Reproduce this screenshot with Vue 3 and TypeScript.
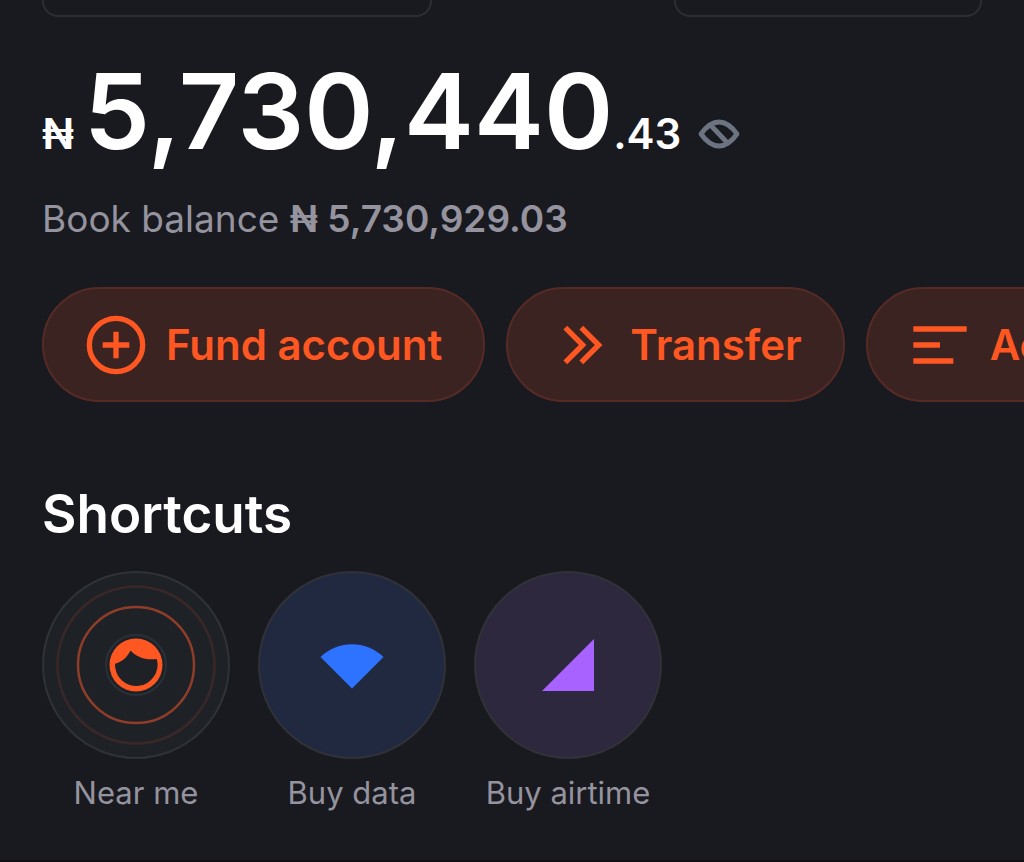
<script setup lang="ts">
interface Action {
  label: string
  icon: 'plus' | 'chevrons' | 'lines'
}

interface Shortcut {
  label: string
  kind: 'near' | 'data' | 'airtime'
}

const actions: Action[] = [
  { label: 'Fund account', icon: 'plus' },
  { label: 'Transfer', icon: 'chevrons' },
  { label: 'Account', icon: 'lines' },
]

const shortcuts: Shortcut[] = [
  { label: 'Near me', kind: 'near' },
  { label: 'Buy data', kind: 'data' },
  { label: 'Buy airtime', kind: 'airtime' },
]
</script>

<template>
  <main class="screen">
    <div class="top">
      <div class="box box-wide"></div>
      <div class="box box-narrow"></div>
    </div>

    <section class="balance">
      <div class="amount">
        <span class="small">₦</span>
        <span class="whole">5,730,440</span>
        <span class="small">.43</span>
        <button class="hide" type="button" aria-label="Hide balance">
          <svg viewBox="0 0 42 30" fill="none" stroke="currentColor" stroke-width="4.8" stroke-linejoin="round">
            <path d="M3 15Q11.500 3 21 3T39 15Q30.500 27 21 27T3 15Z" />
            <path d="M12 5.500 30 24.500" />
          </svg>
        </button>
      </div>
      <p class="book">Book balance <strong>₦ 5,730,929.03</strong></p>
    </section>

    <nav class="actions">
      <button v-for="a in actions" :key="a.label" class="action" type="button">
        <svg viewBox="0 0 24 24" fill="none" stroke="currentColor" stroke-width="2">
          <template v-if="a.icon === 'plus'">
            <circle cx="12" cy="12" r="10" />
            <path d="M7 12H17M12 7V17" />
          </template>
          <path v-else-if="a.icon === 'chevrons'" d="M6.500 5.500 13 12 6.500 18.500M12.500 5.500 19 12 12.500 18.500" />
          <path v-else d="M2 6H22M2 12H12M2 18H17" />
        </svg>
        <span>{{ a.label }}</span>
      </button>
    </nav>

    <section class="shortcuts">
      <h2>Shortcuts</h2>
      <div class="list">
        <button v-for="s in shortcuts" :key="s.label" class="shortcut" type="button">
          <span class="disc" :class="s.kind">
            <svg v-if="s.kind === 'near'" viewBox="2 2 184 184" fill="none">
              <circle cx="94" cy="94" r="78.500" stroke="#3a2827" stroke-width="2.500" />
              <circle cx="94" cy="94" r="58" stroke="#8f3d28" stroke-width="2.500" />
              <circle cx="94" cy="94" r="30" stroke="#2a3038" stroke-width="2" />
              <circle cx="94" cy="94" r="26.500" fill="#ff5722" />
              <path d="M88.500 79.500C93.500 85.500 103 89.500 114.800 88A21.300 21.300 0 1 1 73 92.700C80 91 85.500 86 88.500 79.500Z" fill="#1e2227" />
            </svg>
            <svg v-else-if="s.kind === 'data'" viewBox="2 2 184 184">
              <path d="M94 117.500 62.500 86C80 69 108 69 125.500 86Z" fill="#2e73ff" />
            </svg>
            <svg v-else viewBox="2 2 184 184">
              <path d="M120 68V120H68Z" fill="#a762ff" />
            </svg>
          </span>
          <span>{{ s.label }}</span>
        </button>
      </div>
    </section>
  </main>
</template>

<style>
body {
  margin: 0;
  background: #191920;
}
</style>

<style scoped>
.screen {
  min-height: 100vh;
  box-sizing: border-box;
  overflow: hidden;
  background: #191920;
  border-bottom: 2px solid #101015;
  color: #fff;
  font-family: Inter, "Liberation Sans", sans-serif;
}

button {
  margin: 0;
  padding: 0;
  border: 0;
  background: none;
  color: inherit;
  font: inherit;
}

.top {
  display: flex;
  justify-content: space-between;
  padding: 0 42px;
}

.box {
  box-sizing: border-box;
  height: 17px;
  border: 2px solid #2d2d36;
  border-top: 0;
  border-radius: 0 0 16px 16px;
}

.box-wide {
  flex: 0 1 390px;
}

.box-narrow {
  flex: 0 1 308px;
}

.balance {
  padding: 29px 42px 0;
}

.amount {
  display: flex;
  align-items: baseline;
  line-height: 130px;
  font-weight: 600;
}

.whole {
  margin-left: 10px;
  font-size: 105px;
}

.small {
  font-size: 42px;
  line-height: 48px;
}

.hide {
  margin-left: 17px;
  line-height: 0;
}

.hide svg {
  width: 42px;
  height: 30px;
  color: #6b7480;
}

.book {
  margin: 19px 0 0;
  color: #94939e;
  font-size: 37px;
  line-height: 48px;
}

.book strong {
  font-weight: 600;
}

.actions {
  display: flex;
  gap: 21px;
  margin-top: 44px;
  padding-left: 42px;
}

.action {
  display: flex;
  flex: none;
  align-items: center;
  gap: 18px;
  box-sizing: border-box;
  height: 115px;
  padding: 0 41px 0 40px;
  border: 2px solid #572b25;
  border-radius: 58px;
  background: #3a2321;
  color: #ff5722;
  font-size: 42px;
  font-weight: 600;
}

.action svg {
  width: 64px;
  height: 64px;
}

.shortcuts {
  padding: 80px 42px 0;
}

h2 {
  margin: 0;
  font-size: 53px;
  font-weight: 600;
  line-height: 64px;
}

.list {
  display: flex;
  gap: 28px;
  margin-top: 25px;
}

.shortcut {
  display: flex;
  flex-direction: column;
  align-items: center;
  gap: 14px;
  width: 188px;
  color: #94939e;
  font-size: 31px;
  line-height: 40px;
  white-space: nowrap;
}

.disc {
  display: flex;
  box-sizing: border-box;
  width: 188px;
  height: 188px;
  border: 2px solid #303238;
  border-radius: 50%;
}

.disc svg {
  flex: 1;
}

.near {
  background: #1e2227;
}

.data {
  background: #212940;
}

.airtime {
  background: #2e283e;
}
</style>
